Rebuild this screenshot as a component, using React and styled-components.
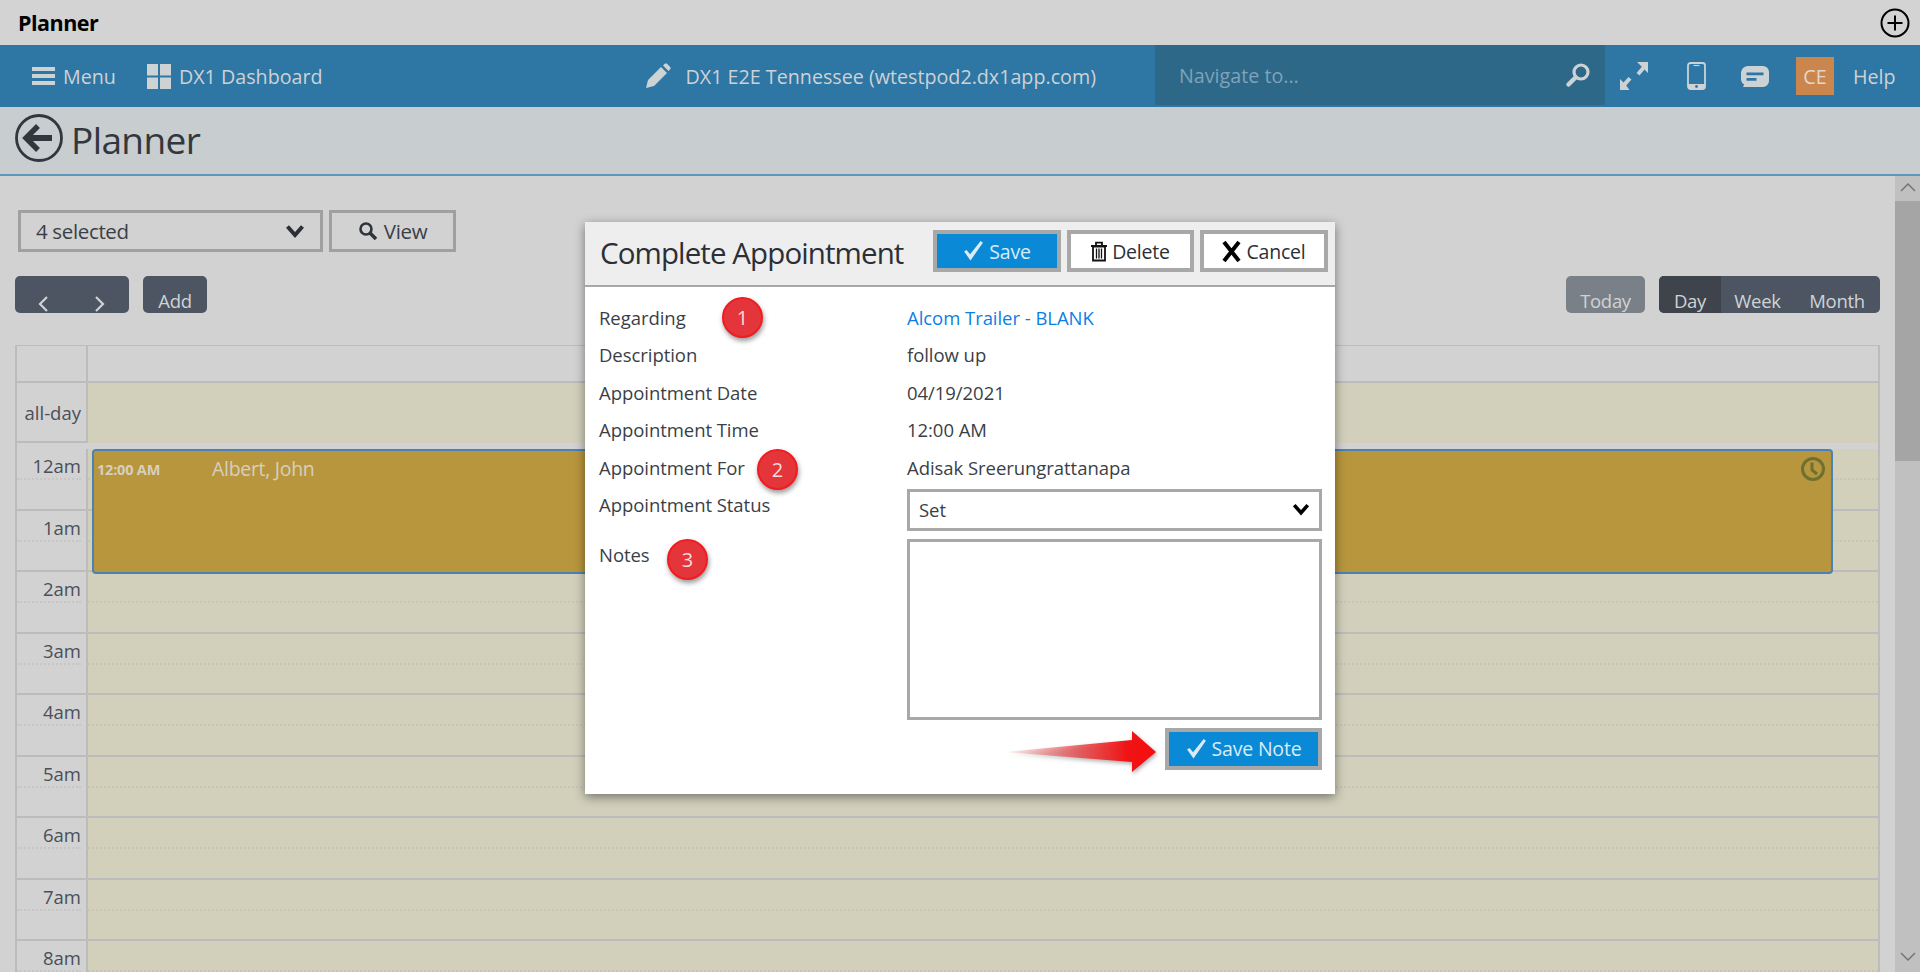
import React from 'react'
import styled, { createGlobalStyle } from 'styled-components'

const FONT = '"Open Sans", "Noto Sans", sans-serif'
const HOURS = ['12am', '1am', '2am', '3am', '4am', '5am', '6am', '7am', '8am']
const DETAILS = [
  ['Regarding', 'Alcom Trailer - BLANK', true],
  ['Description', 'follow up'],
  ['Appointment Date', '04/19/2021'],
  ['Appointment Time', '12:00 AM'],
  ['Appointment For', 'Adisak Sreerungrattanapa'],
]

const GlobalStyle = createGlobalStyle`
  html, body { margin: 0; padding: 0; height: 100%; overflow: hidden; }
  body { font-family: ${FONT}; background: #d2d2d2; }
  * { box-sizing: border-box; }
`

const Page = styled.div`
  position: relative;
  height: 972px;
  overflow: hidden;
  display: flex;
  flex-direction: column;
`

const TitleBar = styled.div`
  height: 45px;
  flex: none;
  background: #d3d3d3;
  display: flex;
  align-items: center;
  justify-content: space-between;
  padding: 0 10px 0 18px;
  font-size: 21.5px;
  font-weight: 700;
  letter-spacing: -0.5px;
  color: #000;
`

const Nav = styled.nav`
  height: 62px;
  flex: none;
  background: #2e76a3;
  color: #cdd2d5;
  display: flex;
  align-items: center;
  font-size: 19.7px;
  padding-left: 32px;
`

const NavItem = styled.div`
  display: flex;
  align-items: center;
  gap: ${p => p.$gap || 8}px;
  margin-left: ${p => p.$left || 0}px;
  white-space: nowrap;
`

const SearchBlock = styled.div`
  width: 450px;
  height: 60px;
  align-self: flex-start;
  background: #2d6889;
  color: #7fa3b8;
  display: flex;
  align-items: center;
  justify-content: space-between;
  padding: 0 14px 0 24px;
  position: absolute;
  left: 1155px;
`

const NavIcons = styled.div`
  position: absolute;
  left: 1605px;
  right: 0;
  display: flex;
  align-items: center;
  height: 62px;
  padding-left: 14px;
`

const IconSlot = styled.div`
  width: 60px;
  display: flex;
  justify-content: flex-start;
  padding-left: ${p => p.$pad || 0}px;
`

const Avatar = styled.div`
  width: 38px;
  height: 38px;
  background: #cb864e;
  color: #e3d6c9;
  display: flex;
  align-items: center;
  justify-content: center;
  margin: 0 19px 0 -3px;
`

const SubHeader = styled.header`
  height: 69px;
  flex: none;
  background: #c8cdd0;
  border-bottom: 2px solid #5e97bb;
  display: flex;
  align-items: flex-start;
  gap: 8px;
  padding: 7px 0 0 15px;
  font-size: 37px;
  line-height: 51px;
  letter-spacing: -0.6px;
  color: #33373d;
`

const Body = styled.div`
  flex: 1;
  display: flex;
  min-height: 0;
`

const Main = styled.main`
  flex: 1;
  padding: 34px 15px 0;
  min-width: 0;
`

const ScrollBar = styled.div`
  width: 25px;
  flex: none;
  background: #c0c0c0;
  display: flex;
  flex-direction: column;
  align-items: center;
  padding-bottom: 6px;
`

const ScrollButton = styled.div`
  height: 25px;
  display: flex;
  align-items: center;
`

const ScrollThumb = styled.div`
  width: 25px;
  height: 260px;
  background: #a5a5a5;
  margin-bottom: auto;
`

const FilterRow = styled.div`
  display: flex;
  gap: 6px;
  margin-left: 3px;
  height: 42px;
`

const OutlineBox = styled.div`
  height: 42px;
  width: ${p => p.$width}px;
  border: 3px solid #a0a0a0;
  color: #3a3f47;
  font-size: 20.5px;
  letter-spacing: -0.35px;
  display: flex;
  align-items: center;
  justify-content: ${p => p.$justify || 'center'};
  gap: 6px;
  padding: ${p => p.$pad || '0'};
  white-space: nowrap;
`

const ToolRow = styled.div`
  display: flex;
  justify-content: space-between;
  margin-top: 24px;
`

const ToolGroup = styled.div`
  display: flex;
  gap: ${p => p.$gap}px;
`

const CalButton = styled.div`
  height: 37px;
  width: ${p => p.$width}px;
  background: ${p => p.$bg || '#4c5561'};
  color: #cfd3d6;
  border-radius: 5px;
  font-size: 18.5px;
  letter-spacing: -0.3px;
  overflow: hidden;
  display: flex;
  align-items: flex-end;
  justify-content: ${p => p.$justify || 'center'};
  padding: ${p => p.$pad || '0'};
  line-height: 24px;
`

const Segment = styled.div`
  height: 37px;
  width: ${p => p.$width}px;
  background: ${p => (p.$active ? '#3f444c' : 'transparent')};
  display: flex;
  align-items: flex-end;
  justify-content: center;
  line-height: 24px;
`

const SegmentGroup = styled.div`
  width: 221px;
  height: 37px;
  border-radius: 5px;
  overflow: hidden;
  background: #4c5561;
  color: #cfd3d6;
  font-size: 18.5px;
  letter-spacing: -0.3px;
  display: flex;
`

const PagerArrow = styled.span`
  line-height: 0;
  margin-bottom: 1px;
`

const Grid = styled.div`
  position: relative;
  margin-top: 32px;
  border-top: 1px solid #bdbdbd;
  border-right: 2px solid #bcbcbc;
  border-left: 2px solid #bcbcbc;
`

const GridRow = styled.div`
  display: grid;
  grid-template-columns: 71px 1fr;
  height: ${p => p.$height}px;
  border-bottom: 2px solid #bcbcbc;
  margin-bottom: ${p => p.$gap || 0}px;
`

const LabelCell = styled.div`
  border-right: 2px solid #bcbcbc;
  color: #4a4f58;
  font-size: 18.5px;
  text-align: right;
  padding-right: 5px;
  line-height: ${p => p.$line || 'normal'};
`

const SlotCell = styled.div`
  background: ${p => (p.$plain ? 'transparent' : '#d2d0bb')};
`

const HalfLine = styled.div`
  height: 31px;
  line-height: 34px;
  border-bottom: 2px dotted ${p => p.$color};
`

const HourRow = styled.div`
  display: grid;
  grid-template-columns: 71px 1fr;
  height: 61.5px;
  border-bottom: 2px solid #bcbcbc;
`

const Event = styled.div`
  position: absolute;
  left: 75px;
  top: 103px;
  width: 1741px;
  height: 125px;
  background: #b8963e;
  border: 2px solid #4a82b8;
  border-radius: 4px;
  color: #d6cfbe;
  display: flex;
  align-items: flex-start;
  padding: 5px 5px 0 3px;
`

const EventTime = styled.span`
  width: 115px;
  margin-top: 4px;
  font-size: 14.5px;
  font-weight: 700;
  letter-spacing: -0.2px;
`

const EventName = styled.span`
  font-size: 19.5px;
  letter-spacing: -0.3px;
  flex: 1;
  line-height: 25px;
`

const Modal = styled.section`
  position: absolute;
  left: 585px;
  top: 222px;
  width: 750px;
  height: 572px;
  background: #fff;
  box-shadow: 0 3px 10px rgba(0, 0, 0, 0.45);
  color: #3a3f47;
`

const ModalHeader = styled.div`
  height: 65px;
  background: #eee;
  border-bottom: 2px solid #a8a8a8;
  display: flex;
  align-items: flex-start;
  gap: 6px;
  padding: 8px 7px 0 15px;
`

const ModalTitle = styled.h2`
  flex: 1;
  margin: 0;
  font-size: 29.5px;
  font-weight: 400;
  line-height: 46px;
  letter-spacing: -0.9px;
  color: #2c3036;
`

const ActionButton = styled.button`
  width: ${p => p.$width}px;
  height: 42px;
  border: 4px solid #a8a8a8;
  background: ${p => (p.$primary ? '#0a8ad6' : '#fff')};
  color: ${p => (p.$primary ? '#dbeaf5' : '#2c3036')};
  font-family: ${FONT};
  font-size: 19.5px;
  letter-spacing: -0.2px;
  display: flex;
  align-items: center;
  justify-content: center;
  gap: 5px;
  padding: 0;
`

const ModalBody = styled.div`
  padding: 11.5px 13px 0 14px;
`

const Field = styled.div`
  display: grid;
  grid-template-columns: 308px 1fr;
  min-height: 37.5px;
  line-height: 37.5px;
  font-size: 18.5px;
  letter-spacing: -0.05px;
  margin-top: ${p => p.$top || 0}px;
`

const FieldValue = styled.div`
  color: ${p => (p.$link ? '#0b7fe6' : '#3a3f47')};
`

const NotesLabel = styled.div`
  line-height: 32px;
`

const NotesBox = styled.div`
  height: 181px;
  border: 3px solid #a8a8a8;
`

const SelectBox = styled.div`
  height: 42px;
  margin-top: 2.5px;
  border: 3px solid #a8a8a8;
  display: flex;
  align-items: center;
  justify-content: space-between;
  padding: 0 9px;
`

const ModalFooter = styled.div`
  display: flex;
  justify-content: flex-end;
  margin-top: 8px;
`

const Badge = styled.div`
  position: absolute;
  left: ${p => p.$x}px;
  top: ${p => p.$y}px;
  width: 41px;
  height: 41px;
  border-radius: 50%;
  background: #e4353a;
  border: 2px solid #f01c20;
  box-shadow: 1px 3px 5px rgba(0, 0, 0, 0.4);
  color: #f6dcdc;
  font-size: 20px;
  display: flex;
  align-items: center;
  justify-content: center;
`

const ArrowMark = styled.svg`
  position: absolute;
  left: 419px;
  top: 507px;
  filter: drop-shadow(1px 2px 2px rgba(0, 0, 0, 0.35));
`

const Chevron = ({ size = 20, color = '#2c3036', weight = 4 }) => (
  <svg width={size} height={size * 0.8} viewBox="0 0 20 16" fill="none">
    <path d="M2.5 3.5 10 12l7.5-8.5" stroke={color} strokeWidth={weight} />
  </svg>
)

const Check = ({ color = '#dbeaf5' }) => (
  <svg width="21" height="20" viewBox="0 0 19 18">
    <path d="M1 9.5 3.2 8l3.200 4L16 0l2 1.600L6.800 17.500z" fill={color} />
  </svg>
)

const Magnifier = () => (
  <svg width="20" height="20" viewBox="0 0 20 20" fill="none" stroke="#2f343a">
    <circle cx="8" cy="8" r="5.5" strokeWidth="2.6" />
    <path d="m12 12 6 6" strokeWidth="3.6" />
  </svg>
)

const ThinChevron = ({ left, right, up, color = '#cfd3d6', width = 2 }) => {
  const d = left ? 'M10 1 3 8l7 7' : right ? 'M3 1l7 7-7 7' : up ? 'M1 10 8 3l7 7' : 'M1 3l7 7 7-7'
  return (
    <svg width="16" height="16" viewBox="0 0 16 16" fill="none">
      <path d={d} stroke={color} strokeWidth={width} />
    </svg>
  )
}

const App = () => (
  <Page>
    <GlobalStyle />
    <TitleBar>
      Planner
      <svg width="30" height="30" viewBox="0 0 30 30" fill="none" stroke="#000">
        <circle cx="15" cy="15" r="13.5" strokeWidth="2" />
        <path d="M15 7.5v15M7.5 15h15" strokeWidth="2" />
      </svg>
    </TitleBar>

    <Nav>
      <NavItem>
        <svg width="23" height="20" viewBox="0 0 23 20" fill="#cdd2d5">
          <path d="M0 1h23v4H0zM0 8h23v4H0zM0 15h23v4H0z" />
        </svg>
        Menu
      </NavItem>
      <NavItem $left={31}>
        <svg width="24" height="25" viewBox="0 0 24 25" fill="#cdd2d5">
          <path d="M0 0h11v11.500H0zM13 0h11v11.500H13zM0 13.500h11V25H0zM13 13.500h11V25H13z" />
        </svg>
        DX1 Dashboard
      </NavItem>
      <NavItem $left={322} $gap={15}>
        <svg width="26" height="26" viewBox="0 0 26 26" fill="#cdd2d5">
          <path d="m1 25 2-8L16 4l6 6L9 23zM18 2.500l1.500-1.500a2 2 0 0 1 2.800 0L25 3.700a2 2 0 0 1 0 2.800l-1.500 1.500z" />
        </svg>
        DX1 E2E Tennessee (wtestpod2.dx1app.com)
      </NavItem>
      <SearchBlock>
        Navigate to...
        <svg width="26" height="26" viewBox="0 0 26 26" fill="none" stroke="#cdd2d5">
          <circle cx="16" cy="10" r="7" strokeWidth="3.200" />
          <path d="m10.500 15.500-7 7" strokeWidth="4.500" strokeLinecap="round" />
        </svg>
      </SearchBlock>
      <NavIcons>
        <IconSlot>
          <svg width="30" height="28" viewBox="0 0 30 28" fill="#cdd2d5">
            <path d="M18 0h11v11l-3.500-3.500-5 6-3-2.500 5.300-6.200zM1 28V17l3.500 3.500 5-5.500 3 2.500-5.300 6 3.300 4.500z" />
          </svg>
        </IconSlot>
        <IconSlot $pad={8}>
          <svg width="19" height="28" viewBox="0 0 19 28" fill="none">
            <rect x="1" y="1" width="17" height="26" rx="2.500" stroke="#cdd2d5" strokeWidth="1.800" />
            <path d="M1 22h17v3a2 2 0 0 1-2 2H3a2 2 0 0 1-2-2z" fill="#cdd2d5" />
            <circle cx="9.500" cy="24.500" r="1.400" fill="#2e76a3" />
            <path d="M6.500 3.500h6" stroke="#cdd2d5" strokeWidth="1.200" />
          </svg>
        </IconSlot>
        <IconSlot $pad={2}>
          <svg width="28" height="21" viewBox="0 0 28 21">
            <path d="M7 0h15a6 6 0 0 1 6 6v9a6 6 0 0 1-6 6H2l1.200-2.500A6 6 0 0 1 0 14V7a7 7 0 0 1 7-7z" fill="#cdd2d5" />
            <path d="M5.500 6.500h17v2.800h-17zM5.500 12h10v2.800h-10z" fill="#2e76a3" />
          </svg>
        </IconSlot>
        <Avatar>CE</Avatar>
        Help
      </NavIcons>
    </Nav>

    <SubHeader>
      <svg width="48" height="48" viewBox="0 0 48 48" fill="none">
        <circle cx="24" cy="24" r="22.500" stroke="#33373d" strokeWidth="2.800" />
        <path d="M37 24H15" stroke="#33373d" strokeWidth="6" />
        <path d="m23 12-12 12 12 12" stroke="#33373d" strokeWidth="5.500" />
      </svg>
      Planner
    </SubHeader>

    <Body>
      <Main>
        <FilterRow>
          <OutlineBox $width={305} $justify="space-between" $pad="0 15px 0 15px">
            4 selected
            <Chevron />
          </OutlineBox>
          <OutlineBox $width={127}>
            <Magnifier />
            View
          </OutlineBox>
        </FilterRow>

        <ToolRow>
          <ToolGroup $gap={14}>
            <CalButton $width={114} $justify="space-between" $pad="0 20px 0 22px">
              <PagerArrow><ThinChevron left width={2.200} /></PagerArrow>
              <PagerArrow><ThinChevron right width={2.200} /></PagerArrow>
            </CalButton>
            <CalButton $width={64}>Add</CalButton>
          </ToolGroup>
          <ToolGroup $gap={14}>
            <CalButton $width={79} $bg="#7a8087">Today</CalButton>
            <SegmentGroup>
              <Segment $width={62} $active>Day</Segment>
              <Segment $width={73}>Week</Segment>
              <Segment $width={86}>Month</Segment>
            </SegmentGroup>
          </ToolGroup>
        </ToolRow>

        <Grid>
          <GridRow $height={37}>
            <LabelCell />
            <SlotCell $plain />
          </GridRow>
          <GridRow $height={60} $gap={6}>
            <LabelCell $line="60px">all-day</LabelCell>
            <SlotCell />
          </GridRow>
          {HOURS.map(hour => (
            <HourRow key={hour}>
              <LabelCell>
                <HalfLine $color="#c6c6c6">{hour}</HalfLine>
              </LabelCell>
              <SlotCell>
                <HalfLine $color="#c8c6b2" />
              </SlotCell>
            </HourRow>
          ))}
          <Event>
            <EventTime>12:00 AM</EventTime>
            <EventName>Albert, John</EventName>
            <svg width="26" height="26" viewBox="0 0 26 26" fill="none" stroke="#6f7030" strokeWidth="3">
              <circle cx="13" cy="13" r="10.500" />
              <path d="M12 6.500V14l5 4" />
            </svg>
          </Event>
        </Grid>
      </Main>
      <ScrollBar>
        <ScrollButton><ThinChevron up color="#6e6e6e" width={1.300} /></ScrollButton>
        <ScrollThumb />
        <ThinChevron color="#6e6e6e" width={1.300} />
      </ScrollBar>
    </Body>

    <Modal>
      <ModalHeader>
        <ModalTitle>Complete Appointment</ModalTitle>
        <ActionButton $primary $width={128}>
          <Check />
          Save
        </ActionButton>
        <ActionButton $width={127}>
          <svg width="16" height="21" viewBox="0 0 16 20" fill="none" stroke="#111">
            <path d="M0 4.500h16M5 4V1.200h6V4" strokeWidth="1.800" />
            <path d="M2 5h12v14H2z" strokeWidth="1.800" />
            <path d="M5.500 7v10M8 7v10M10.500 7v10" strokeWidth="1.300" />
          </svg>
          Delete
        </ActionButton>
        <ActionButton $width={128}>
          <svg width="19" height="21" viewBox="0 0 19 21" fill="none" stroke="#000">
            <path d="m2 1 15 19M17 1 2 20" strokeWidth="4" />
          </svg>
          Cancel
        </ActionButton>
      </ModalHeader>
      <ModalBody>
        {DETAILS.map(([label, value, link]) => (
          <Field key={label}>
            <div>{label}</div>
            <FieldValue $link={link}>{value}</FieldValue>
          </Field>
        ))}
        <Field>
          <div>Appointment Status</div>
          <SelectBox>
            Set
            <Chevron color="#000" size={18} />
          </SelectBox>
        </Field>
        <Field $top={8}>
          <NotesLabel>Notes</NotesLabel>
          <NotesBox />
        </Field>
        <ModalFooter>
          <ActionButton $primary $width={157}>
            <Check />
            Save Note
          </ActionButton>
        </ModalFooter>
      </ModalBody>

      <Badge $x={137} $y={75}>1</Badge>
      <Badge $x={172} $y={227}>2</Badge>
      <Badge $x={82} $y={317}>3</Badge>
      <ArrowMark width="156" height="44" viewBox="0 0 156 44">
        <defs>
          <linearGradient id="arrowFade" x1="0" x2="1" y1="0" y2="0">
            <stop offset="0" stopColor="#f26a6a" stopOpacity="0.1" />
            <stop offset="0.5" stopColor="#e9494c" stopOpacity="0.85" />
            <stop offset="0.8" stopColor="#f01416" />
            <stop offset="1" stopColor="#f70d0d" />
          </linearGradient>
        </defs>
        <path d="M2 23 128 11V2l24 21-24 20V33z" fill="url(#arrowFade)" />
      </ArrowMark>
    </Modal>
  </Page>
)

export default App
